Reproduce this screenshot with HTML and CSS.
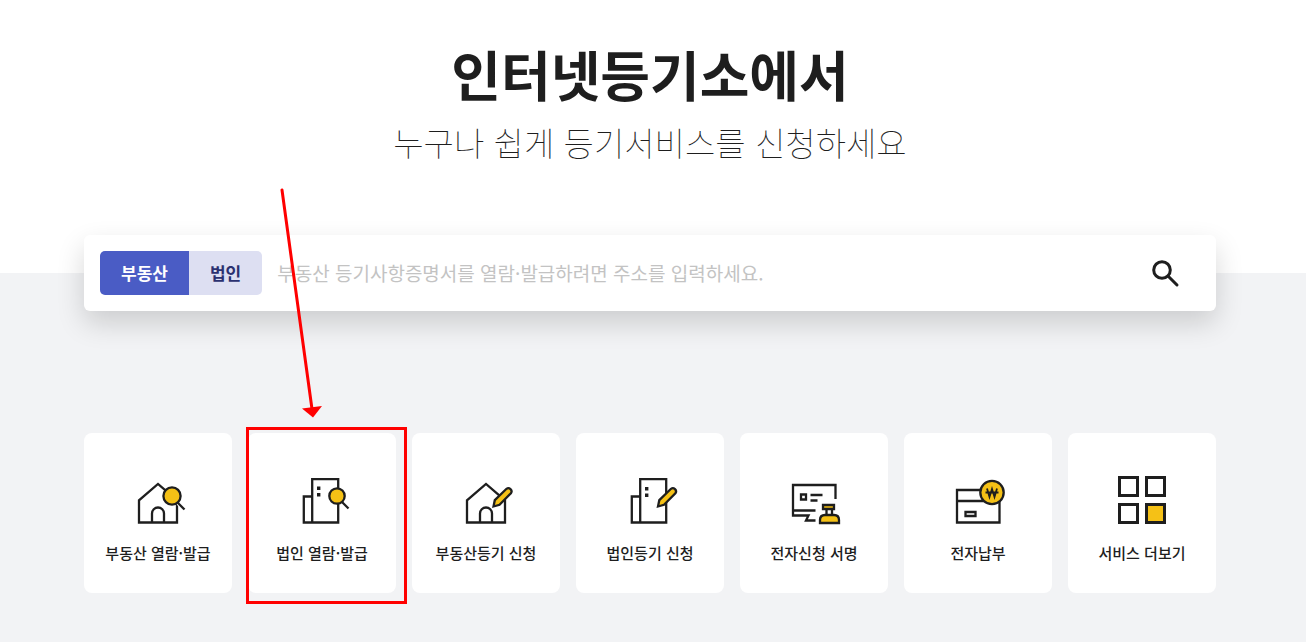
FILE: index.html
```html
<!DOCTYPE html>
<html lang="ko">
<head>
<meta charset="utf-8">
<meta name="viewport" content="width=device-width, initial-scale=1">
<title>인터넷등기소</title>
<link rel="stylesheet" href="styles.css">
</head>
<body>
<main class="page">
  <header class="hero">
    <h1 class="hero-title">인터넷등기소에서</h1>
    <p class="hero-sub">누구나 쉽게 등기서비스를 신청하세요</p>
  </header>

  <form class="search" role="search">
    <div class="tabs">
      <button type="button" class="tab tab-active">부동산</button>
      <button type="button" class="tab">법인</button>
    </div>
    <input class="search-input" type="text" aria-label="주소 검색" placeholder="부동산 등기사항증명서를 열람·발급하려면 주소를 입력하세요.">
    <button type="submit" class="search-button" aria-label="검색">
      <svg width="32" height="32" viewBox="0 0 32 32" fill="none" stroke="#1e1e1e" stroke-width="3" stroke-linecap="round"><circle cx="13" cy="13" r="8.3"/><path d="M19.5 19.5L28 28"/></svg>
    </button>
  </form>

  <nav class="services" aria-label="주요 서비스">
    <a class="card" href="#">
      <svg class="icon" viewBox="3 -1 56 56"><path d="M12 48.5V26.3L31 10l19 16.3V48.5ZM25 48.5V39.5a6 6 0 0 1 12 0V48.5"/><path class="halo" d="M45 22h.1M51 29l6 6"/><path d="M50.5 28.5l7 7"/><circle class="gold" cx="45" cy="22" r="8.6"/></svg>
      <span>부동산 열람·발급</span>
    </a>
    <a class="card card-marked" href="#">
      <svg class="icon" viewBox="2 -1 56 56"><path d="M20.2 48.5V5.2h26V48.5ZM20.2 22.500H11.800V48.500h8.400"/><path class="dot" d="M25 12.500h3.400v3.400H25zM25 19h3.400v3.400H25z"/><path d="M50 28l6.500 6.500"/><circle class="gold" cx="45" cy="22" r="7.700"/></svg>
      <span>법인 열람·발급</span>
    </a>
    <a class="card" href="#">
      <svg class="icon" viewBox="3 -1 56 56"><path d="M12 48.500V26.300L31 10l19 16.300V48.500ZM25 48.500V39.500a6 6 0 0 1 12 0V48.500"/><path class="gold" d="M38.500 32.500l1.300-6.300L51.500 14.800q2-1.500 4 .3t.4 4.200L44.500 30.800Z"/></svg>
      <span>부동산등기 신청</span>
    </a>
    <a class="card" href="#">
      <svg class="icon" viewBox="2 -1 56 56"><path d="M20.200 48.500V5.200h26V48.500ZM20.200 22.500H11.800V48.500h8.400"/><path class="dot" d="M25 13h3.400v3.400H25zM25 19.500h3.400v3.400H25z"/><path class="gold" d="M38 32.500l1.300-6.300L51 14.800q2-1.500 4 .3t.4 4.200L44 30.800Z"/></svg>
      <span>법인등기 신청</span>
    </a>
    <a class="card" href="#">
      <svg class="icon" viewBox="2 -1 56 56"><path d="M51.500 25V11H9V41.500H24.500L22 46.500H31.500M9 36.500H31.500M26.500 21H38.500M26.500 26.500h7"/><path d="M17 20.500h5v5h-5z"/><path d="M42.500 35v6M48 35v6"/><path class="gold" d="M39 31h11v4h-11zM36 49v-3q0-5 5-5h9q5 0 5 5v3Z"/></svg>
      <span>전자신청 서명</span>
    </a>
    <a class="card" href="#">
      <svg class="icon" viewBox="2 -1 56 56"><path d="M9 16h42.500v32.500H9zM9 27h42.500M17.500 38h10v4h-10z"/><circle class="gold" cx="44" cy="18.500" r="11.700"/><path class="won" d="M39 14.500l2.500 8.500 2.500-8 2.500 8L49 14.500M37.500 18.500H50.500"/></svg>
      <span>전자납부</span>
    </a>
    <a class="card" href="#">
      <svg class="icon icon-grid" viewBox="2 0 56 56"><path d="M7.500 4.500h18v18h-18zM34.500 4.500h18v18h-18zM7.500 31.500h18v18h-18z"/><path class="gold" d="M34.500 31.500h18v18h-18z"/></svg>
      <span>서비스 더보기</span>
    </a>
  </nav>

  <svg class="arrow" width="44" height="232" viewBox="0 0 44 232" aria-hidden="true"><path d="M6 3L36 222" fill="none" stroke="#f00" stroke-width="3" stroke-linecap="round"/><path d="M26 221.500L46 219 37 230.500Z" fill="#f00"/></svg>
</main>
</body>
</html>
```
FILE: styles.css
```css
* {
  box-sizing: border-box;
}

body {
  margin: 0;
  min-height: 100vh;
  color: #1e1e1e;
  background: linear-gradient(#fff 273px, #f2f3f5 273px);
  font-family: "Noto Sans CJK KR", sans-serif;
}

.page {
  position: relative;
  padding: 36px 90px 48px 84px;
}

.hero {
  height: 199px;
  text-align: center;
}

.hero-title {
  margin: 0;
  font-size: 54px;
  line-height: 76px;
  font-weight: 700;
}

.hero-sub {
  margin: 3px 0 0;
  font-size: 33px;
  line-height: 54px;
  font-weight: 100;
}

.search {
  display: flex;
  align-items: center;
  padding: 16px;
  background: #fff;
  border-radius: 6px;
  box-shadow: 0 12px 28px rgba(0, 0, 0, 0.16);
}

.tabs {
  display: flex;
  overflow: hidden;
  border-radius: 5px;
}

.tab {
  height: 44px;
  padding: 0 21px;
  border: 0;
  color: #2b3170;
  background: #dddff2;
  font: 700 17px/44px "Noto Sans CJK KR", sans-serif;
}

.tab-active {
  color: #fff;
  background: #4a5cc5;
}

.search-input {
  flex: 1;
  min-width: 0;
  height: 44px;
  padding: 0 15px;
  border: 0;
  outline: 0;
  background: transparent;
  color: #1e1e1e;
  font: 400 19px/44px "Noto Sans CJK KR", sans-serif;
}

.search-input::placeholder {
  color: #c3c3c3;
}

.search-button {
  display: flex;
  padding: 0;
  margin-right: 19px;
  border: 0;
  background: none;
}

.services {
  display: grid;
  grid-template-columns: repeat(7, 1fr);
  gap: 16px;
  margin-top: 122px;
}

.card {
  position: relative;
  display: flex;
  flex-direction: column;
  align-items: center;
  gap: 9px;
  height: 160px;
  padding-top: 40px;
  border-radius: 8px;
  background: #fff;
  color: #1e1e1e;
  font-size: 15px;
  line-height: 30px;
  font-weight: 500;
  text-decoration: none;
  white-space: nowrap;
}

.card-marked::after {
  content: "";
  position: absolute;
  inset: -6px -11px -11px -2px;
  z-index: 1;
  border: 3px solid #f00;
}

.icon {
  width: 56px;
  height: 56px;
  overflow: visible;
  fill: none;
  stroke: #1e1e1e;
  stroke-width: 2.3;
}

.icon .gold {
  fill: #f5c116;
}

.icon .dot {
  fill: #1e1e1e;
  stroke: none;
}

.icon .halo {
  stroke: #fff;
  stroke-width: 4;
}

.icon .won {
  stroke-width: 1.8;
}

.icon-grid {
  stroke-width: 3;
}

.arrow {
  position: absolute;
  top: 187px;
  left: 276px;
  z-index: 1;
  overflow: visible;
  pointer-events: none;
}
```
